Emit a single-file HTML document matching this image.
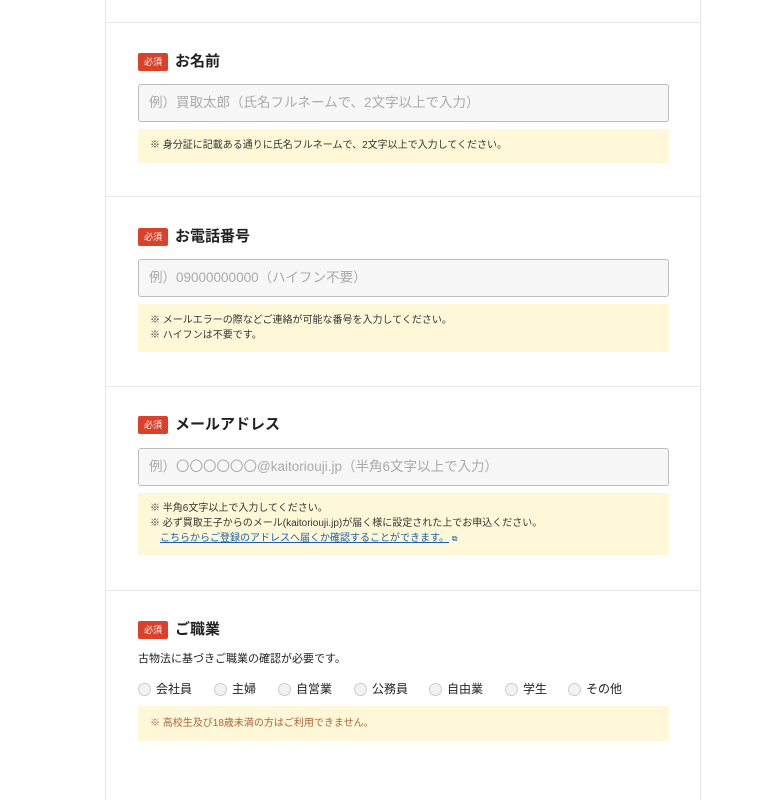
<!DOCTYPE html>
<html><head><meta charset="utf-8"><style>
*{margin:0;padding:0;box-sizing:border-box}
body{width:768px;height:800px;background:#fff;position:relative;overflow:hidden;font-family:"Liberation Sans","Noto Sans CJK JP",sans-serif;color:#222}
.wrap{position:absolute;left:105px;top:0;width:596px;height:800px;border-left:1px solid #e6e6e6;border-right:1px solid #e6e6e6}
.hr{position:absolute;left:106px;width:594px;height:1px;background:#e8e8e8}
.ttl{position:absolute;left:138px;font-size:15px;font-weight:bold;display:flex;align-items:center;line-height:20px}
.badge{display:inline-block;width:30px;height:18px;background:#d9412b;color:#fff;font-size:9px;font-weight:normal;text-align:center;line-height:18px;border-radius:2px;margin-right:7px}
.inp{position:absolute;left:138px;width:531px;height:38px;border:1px solid #bdbdbd;border-radius:3px;background:#f7f7f7;color:#aaa;font-size:13.5px;padding-left:10px;line-height:36px}
.note{position:absolute;left:138px;width:531px;background:#fff8d8;font-size:10px;line-height:15px;padding:0 12px;color:#333}
.r{position:absolute;top:682px;font-size:12px;line-height:14px;display:flex;align-items:center}
.r i{display:inline-block;width:13px;height:13px;border-radius:50%;border:1px solid #ccc;background:#f2f2f2;margin-right:5px}
</style></head><body>
<div class="wrap"></div>
<div class="hr" style="top:22px"></div>
<div class="hr" style="top:196px"></div>
<div class="hr" style="top:386px"></div>
<div class="hr" style="top:590px"></div>

<div class="ttl" style="top:52px"><span class="badge">必須</span>お名前</div>
<div class="inp" style="top:84px">例）買取太郎（氏名フルネームで、2文字以上で入力）</div>
<div class="note" style="top:129px;height:34px;padding-top:9px">※ 身分証に記載ある通りに氏名フルネームで、2文字以上で入力してください。</div>

<div class="ttl" style="top:227px"><span class="badge">必須</span>お電話番号</div>
<div class="inp" style="top:259px">例）09000000000（ハイフン不要）</div>
<div class="note" style="top:304px;height:48px;padding-top:9px">※ メールエラーの際などご連絡が可能な番号を入力してください。<br>※ ハイフンは不要です。</div>

<div class="ttl" style="top:415px"><span class="badge">必須</span>メールアドレス</div>
<div class="inp" style="top:448px">例）〇〇〇〇〇〇@kaitoriouji.jp（半角6文字以上で入力）</div>
<div class="note" style="top:493px;height:62px;padding-top:8px">※ 半角6文字以上で入力してください。<br>※ 必ず買取王子からのメール(kaitoriouji.jp)が届く様に設定された上でお申込ください。<br><span style="color:#1a5fa8;text-decoration:underline;padding-left:10px">こちらからご登録のアドレスへ届くか確認することができます。</span> <span style="color:#1a5fa8;font-size:8px">⧉</span></div>

<div class="ttl" style="top:620px"><span class="badge">必須</span>ご職業</div>
<div style="position:absolute;left:138px;top:652px;font-size:11px;line-height:15px">古物法に基づきご職業の確認が必要です。</div>
<div class="r" style="left:138px"><i></i>会社員</div>
<div class="r" style="left:214px"><i></i>主婦</div>
<div class="r" style="left:278px"><i></i>自営業</div>
<div class="r" style="left:354px"><i></i>公務員</div>
<div class="r" style="left:429px"><i></i>自由業</div>
<div class="r" style="left:505px"><i></i>学生</div>
<div class="r" style="left:568px"><i></i>その他</div>
<div class="note" style="top:706px;height:35px;padding-top:10px;color:#b0623a">※ 高校生及び18歳未満の方はご利用できません。</div>
</body></html>
